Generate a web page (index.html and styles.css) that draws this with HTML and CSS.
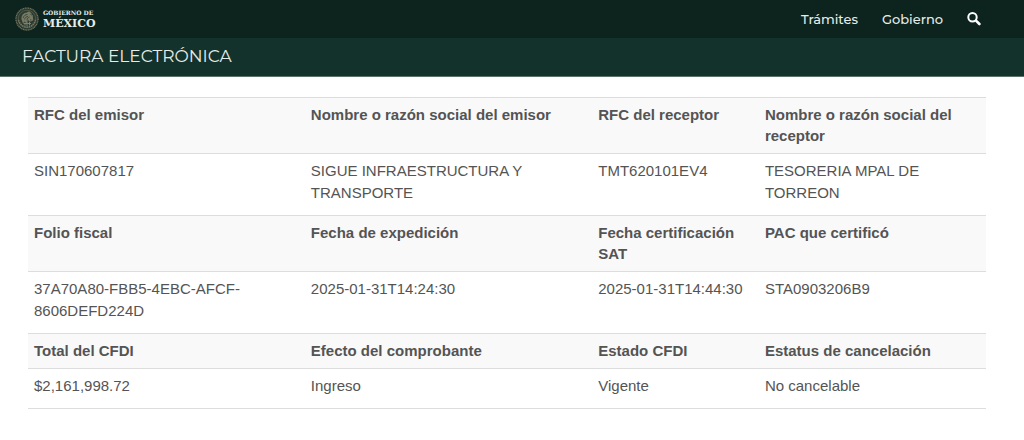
FILE: index.html
```html
<!DOCTYPE html>
<html lang="es">
<head>
    <meta charset="UTF-8">
    <title>Factura Electrónica</title>
    <meta name="viewport" content="width=device-width, initial-scale=1.0">
    <link rel="stylesheet" href="styles.css">
</head>
<body>
<header>
    <nav class="navbar">
        <a href="#" class="logo">
            <svg class="seal" viewBox="0 0 48 48" aria-hidden="true">
                <circle cx="24" cy="24" r="23" fill="#2b3b31"/>
                <circle cx="24" cy="24" r="22" fill="none" stroke="#77775f" stroke-width="2.5" stroke-dasharray="2 1.4"/>
                <circle cx="24" cy="24" r="17.5" fill="none" stroke="#4d5848" stroke-width="2"/>
                <!-- eagle -->
                <path d="M13 25c-1-8 4-14 11-14 2-3 6-3 7 0l3 2-4 1c5 3 7 8 5 14l-4-4-1 6-4-4-3 6-4-3-3 4z" fill="#777a63"/>
                <path d="M16 22c2-5 5-7 9-7M19 25c1-4 4-6 7-6M24 27c0-4 2-6 5-7" fill="none" stroke="#2b3b31" stroke-width="1.5"/>
                <!-- snake and cactus -->
                <path d="M33 15c4 3 0 5 2 8s-2 5-5 5M20 31v6M24 29v9M29 30v7M17 33h15" fill="none" stroke="#858570" stroke-width="1.8"/>
                <!-- laurel -->
                <path d="M7 26c2 8 8 14 17 14s15-6 17-14" fill="none" stroke="#77775f" stroke-width="3" stroke-dasharray="3 1.5"/>
            </svg>
            <span class="logo-text">
                <span class="logo-small">GOBIERNO DE</span>
                <span class="logo-big">MÉXICO</span>
            </span>
        </a>
        <div class="menu">
            <a href="#">Trámites</a>
            <a href="#">Gobierno</a>
            <button type="button" class="search" aria-label="Buscar">
                <svg viewBox="0 0 14 14" width="14" height="14">
                    <circle cx="5.5" cy="5.2" r="4.2" fill="none" stroke="currentColor" stroke-width="2"/>
                    <path d="M9 8.6l3.4 3.4" stroke="currentColor" stroke-width="2.6" stroke-linecap="round"/>
                </svg>
            </button>
        </div>
    </nav>
    <div class="subnav">
        <h1>FACTURA ELECTRÓNICA</h1>
    </div>
</header>
<main>
    <table class="factura">
        <colgroup>
            <col class="col-emisor">
            <col class="col-nombre">
            <col class="col-receptor">
            <col class="col-razon">
        </colgroup>
        <tbody>
            <tr>
                <th>RFC del emisor</th>
                <th>Nombre o razón social del emisor</th>
                <th>RFC del receptor</th>
                <th>Nombre o razón social del receptor</th>
            </tr>
            <tr>
                <td>SIN170607817</td>
                <td>SIGUE INFRAESTRUCTURA Y TRANSPORTE</td>
                <td>TMT620101EV4</td>
                <td>TESORERIA MPAL DE TORREON</td>
            </tr>
            <tr>
                <th>Folio fiscal</th>
                <th>Fecha de expedición</th>
                <th>Fecha certificación SAT</th>
                <th>PAC que certificó</th>
            </tr>
            <tr>
                <td>37A70A80-FBB5-4EBC-AFCF-<wbr>8606DEFD224D</td>
                <td>2025-01-31T14:24:30</td>
                <td>2025-01-31T14:44:30</td>
                <td>STA0903206B9</td>
            </tr>
            <tr>
                <th>Total del CFDI</th>
                <th>Efecto del comprobante</th>
                <th>Estado CFDI</th>
                <th>Estatus de cancelación</th>
            </tr>
            <tr>
                <td>$2,161,998.72</td>
                <td>Ingreso</td>
                <td>Vigente</td>
                <td>No cancelable</td>
            </tr>
        </tbody>
    </table>
</main>
</body>
</html>
```
FILE: styles.css
```css
body {
    margin: 0;
    background-color: #fff;
    color: #545454;
    font-family: Arial, "Liberation Sans", sans-serif;
    font-size: 15px;
    line-height: 21px;
}
a {
    color: inherit;
    text-decoration: none;
}
.navbar {
    display: flex;
    justify-content: space-between;
    align-items: center;
    height: 38px;
    padding: 0 43px 0 15px;
    background-color: #0c231e; /* dark green */
    color: #e6ece9;
}
.logo {
    display: flex;
    align-items: center;
    gap: 4px;
}
.seal {
    width: 24px;
    height: 24px;
}
.logo-text {
    display: flex;
    flex-direction: column;
    gap: 1px;
    font-family: "DejaVu Serif", serif;
    font-weight: bold;
}
.logo-small {
    font-size: 6px;
    line-height: 8px;
}
.logo-big {
    font-size: 11px;
    line-height: 11px;
}
.menu {
    display: flex;
    align-items: center;
    gap: 24px;
    font-family: Montserrat, Inter, sans-serif;
    font-size: 13px;
    font-weight: 500;
}
.search {
    display: flex;
    padding: 0;
    border: 0;
    background: none;
    color: #fff;
}
.subnav {
    padding: 8px 22px 9px;
    border-bottom: 1px solid #5d716b;
    background-color: #13322b; /* light green */
    color: #e6ece9;
}
h1 {
    margin: 0;
    font-family: Montserrat, Inter, sans-serif;
    font-size: 17px;
    font-weight: normal;
    line-height: 21px;
}
main {
    padding: 20px 38px 20px 28px;
}
.factura {
    width: 100%;
    table-layout: fixed;
    border-collapse: collapse;
    border-bottom: 1px solid #ddd;
}
.col-emisor {
    width: 28.9%;
}
.col-nombre {
    width: 30%;
}
.col-receptor {
    width: 17.4%;
}
.factura th,
.factura td {
    padding: 6px 6px 7px;
    border-top: 1px solid #ddd;
    text-align: left;
    vertical-align: top;
}
.factura th {
    background-color: #f9f9f9;
}
.factura td {
    padding-bottom: 11px;
    line-height: 22px;
}
```
